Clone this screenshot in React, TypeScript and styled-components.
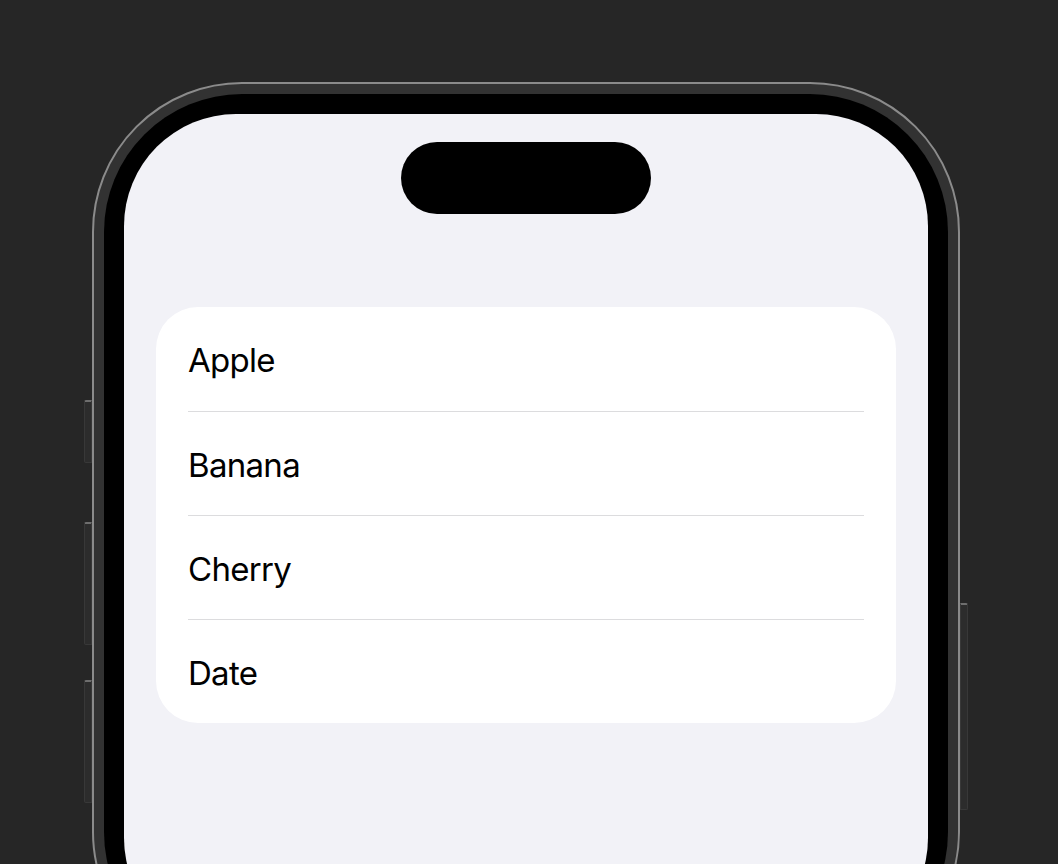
import styled, { createGlobalStyle } from "styled-components";

const GlobalStyle = createGlobalStyle`
  html, body {
    margin: 0;
    padding: 0;
    background: #262626;
    overflow: hidden;
  }
  body {
    font-family: Inter, "Noto Sans", "Liberation Sans", sans-serif;
  }
`;

const Stage = styled.div`
  width: 1058px;
  height: 864px;
  overflow: hidden;
  box-sizing: border-box;
  padding: 82px 0 0 92px;
`;

const Phone = styled.div`
  position: relative;
  box-sizing: border-box;
  width: 868px;
  height: 900px;
  padding: 10px;
  border: 2px solid #8b8b8b;
  border-radius: 150px;
  background: #323232;
`;

const Bezel = styled.div`
  box-sizing: border-box;
  height: 100%;
  padding: 20px;
  border-radius: 138px;
  background: #000;
`;

const Screen = styled.div`
  height: 100%;
  box-sizing: border-box;
  padding: 28px 32px 0;
  border-radius: 112px;
  background: #f2f2f7;
  display: flex;
  flex-direction: column;
  align-items: center;
`;

const Island = styled.div`
  width: 250px;
  height: 72px;
  border-radius: 36px;
  background: #000;
`;

// hardware buttons sticking out of the frame edge
const SideButton = styled.div<{ $side: "left" | "right"; $top: number; $height: number }>`
  position: absolute;
  ${(p) => (p.$side === "left" ? "left: -10px;" : "right: -10px;")}
  top: ${(p) => p.$top}px;
  height: ${(p) => p.$height}px;
  width: 8px;
  box-sizing: border-box;
  background: #2c2c2c;
  border: 1px solid #383838;
  border-top: 2px solid #6e6e6e;
  border-radius: ${(p) => (p.$side === "left" ? "2px 0 0 2px" : "0 2px 2px 0")};
`;

const List = styled.div`
  align-self: stretch;
  margin-top: 93px;
  background: #fff;
  border-radius: 42px;
  overflow: hidden;
`;

const Row = styled.div`
  height: 104px;
  margin: 0 32px;
  display: flex;
  align-items: center;
  box-sizing: border-box;
  padding-top: 2px;
  font-size: 33px;
  color: #000;
  letter-spacing: -0.7px;
  & + & {
    border-top: 1px solid #dcdcde;
  }
`;

const fruits = ["Apple", "Banana", "Cherry", "Date"];

export default function App() {
  return (
    <>
      <GlobalStyle />
      <Stage>
        <Phone>
          <SideButton $side="left" $top={316} $height={63} />
          <SideButton $side="left" $top={438} $height={123} />
          <SideButton $side="left" $top={596} $height={123} />
          <SideButton $side="right" $top={519} $height={207} />
          <Bezel>
            <Screen>
              <Island />
              <List>
                {fruits.map((name) => (
                  <Row key={name}>{name}</Row>
                ))}
              </List>
            </Screen>
          </Bezel>
        </Phone>
      </Stage>
    </>
  );
}
